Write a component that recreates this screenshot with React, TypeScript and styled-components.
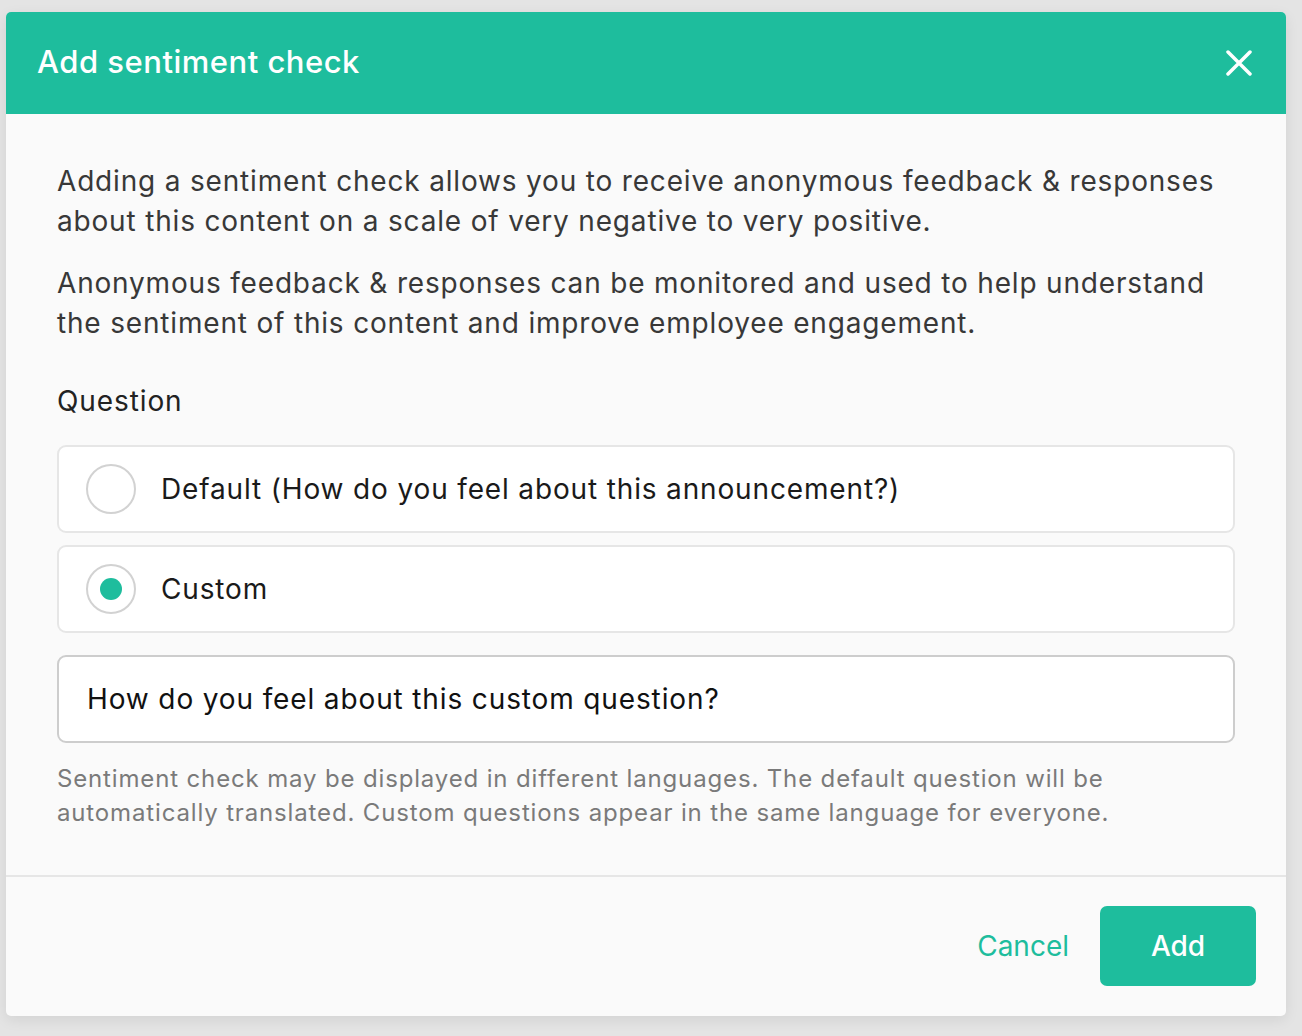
import styled, { createGlobalStyle } from "styled-components";
import { useState } from "react";

const GlobalStyle = createGlobalStyle`
  html, body {
    margin: 0;
    padding: 0;
    background: #e4e4e4;
    font-family: "Inter", "Noto Sans", sans-serif;
  }
  * { box-sizing: border-box; }
`;

const Page = styled.div`
  padding: 12px 16px 20px 6px;
  min-height: 1036px;
`;

const Modal = styled.div`
  width: 1280px;
  background: #fafafa;
  border-radius: 5px;
  overflow: hidden;
  box-shadow: 0 4px 14px rgba(0, 0, 0, 0.08);
`;

const Header = styled.header`
  height: 102px;
  background: #1ebd9d;
  display: flex;
  align-items: center;
  justify-content: space-between;
  padding: 0 32px 0 31px;
`;

const Title = styled.h1`
  margin: 0;
  color: #fff;
  font-size: 31px;
  font-weight: 500;
  letter-spacing: 0.5px;
  padding-bottom: 4px;
`;

const CloseButton = styled.button`
  background: none;
  border: none;
  padding: 0;
  width: 30px;
  height: 30px;
  display: flex;
  align-items: center;
  justify-content: center;
  cursor: pointer;
`;

const Body = styled.div`
  padding: 47px 51px 45px 51px;
  border-bottom: 2px solid #e6e6e6;
`;

const Paragraph = styled.p`
  margin: 0 0 22px;
  font-size: 28px;
  line-height: 40px;
  color: #383838;
  letter-spacing: 0.82px;
`;

const Label = styled.div`
  margin-top: 38px;
  font-size: 28px;
  line-height: 40px;
  color: #222;
  letter-spacing: 0.9px;
`;

const Options = styled.div`
  margin-top: 24px;
  display: flex;
  flex-direction: column;
  gap: 12px;
`;

const Option = styled.label`
  height: 88px;
  background: #fff;
  border: 2px solid #e6e6e6;
  border-radius: 9px;
  display: flex;
  align-items: center;
  padding-left: 27px;
  gap: 25px;
  cursor: pointer;
  font-size: 28px;
  letter-spacing: 0.85px;
  color: #1a1a1a;
`;

const Radio = styled.span<{ $checked: boolean }>`
  width: 50px;
  height: 50px;
  border-radius: 50%;
  border: 2px solid #d2d2d2;
  background: #fff;
  display: flex;
  align-items: center;
  justify-content: center;
  flex-shrink: 0;

  &::after {
    content: "";
    width: 22px;
    height: 22px;
    border-radius: 50%;
    background: #1ebd9d;
    display: ${(p) => (p.$checked ? "block" : "none")};
  }
`;

const Input = styled.input`
  margin-top: 22px;
  width: 100%;
  height: 88px;
  border: 2px solid #cdcdcd;
  border-radius: 9px;
  background: #fff;
  padding: 0 28px;
  font-family: inherit;
  font-size: 28px;
  letter-spacing: 0.87px;
  color: #111;
  outline: none;
`;

const Help = styled.p`
  margin: 19px 0 0;
  font-size: 24px;
  line-height: 34px;
  letter-spacing: 0.85px;
  color: #7a7a7a;
`;

const Footer = styled.footer`
  height: 139px;
  display: flex;
  align-items: center;
  justify-content: flex-end;
  gap: 31px;
  padding: 0 30px 1px;
`;

const CancelButton = styled.button`
  background: none;
  border: none;
  padding: 0;
  font-family: inherit;
  font-size: 28px;
  color: #1ebd9d;
  cursor: pointer;
`;

const AddButton = styled.button`
  width: 156px;
  height: 80px;
  border: none;
  border-radius: 7px;
  background: #1ebd9d;
  color: #fff;
  font-family: inherit;
  font-size: 28px;
  font-weight: 500;
  cursor: pointer;
`;

export default function App() {
  const [choice, setChoice] = useState<"default" | "custom">("custom");
  const [question, setQuestion] = useState("How do you feel about this custom question?");

  return (
    <>
      <GlobalStyle />
      <Page>
        <Modal>
          <Header>
            <Title>Add sentiment check</Title>
            <CloseButton aria-label="Close">
              <svg width="26" height="26" viewBox="0 0 26 26">
                <path d="M2 2 L24 24 M24 2 L2 24" stroke="#fff" strokeWidth="3.5" strokeLinecap="round" />
              </svg>
            </CloseButton>
          </Header>
          <Body>
            <Paragraph>
              Adding a sentiment check allows you to receive anonymous feedback &amp; responses about this
              content on a scale of very negative to very positive.
            </Paragraph>
            <Paragraph>
              Anonymous feedback &amp; responses can be monitored and used to help understand the sentiment
              of this content and improve employee engagement.
            </Paragraph>
            <Label>Question</Label>
            <Options>
              <Option onClick={() => setChoice("default")}>
                <Radio $checked={choice === "default"} />
                Default (How do you feel about this announcement?)
              </Option>
              <Option onClick={() => setChoice("custom")}>
                <Radio $checked={choice === "custom"} />
                Custom
              </Option>
            </Options>
            <Input value={question} onChange={(e) => setQuestion(e.target.value)} />
            <Help>
              Sentiment check may be displayed in different languages. The default question will be
              automatically translated. Custom questions appear in the same language for everyone.
            </Help>
          </Body>
          <Footer>
            <CancelButton>Cancel</CancelButton>
            <AddButton>Add</AddButton>
          </Footer>
        </Modal>
      </Page>
    </>
  );
}
